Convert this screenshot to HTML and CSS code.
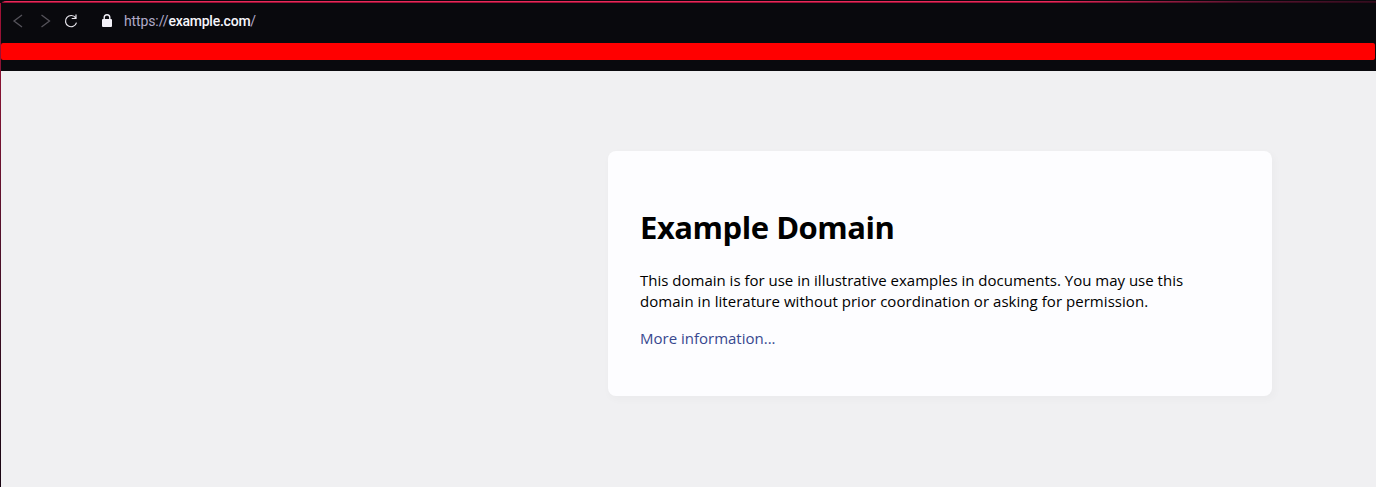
FILE: index.html
```html
<!DOCTYPE html>
<html lang="en">
<head>
<meta charset="utf-8">
<title>Example Domain</title>
<link rel="stylesheet" href="styles.css">
</head>
<body>
<div class="window">
  <header class="toolbar">
    <svg class="icon nav" viewBox="0 0 16 16"><path d="M12 2 4 8l8 6"/></svg>
    <svg class="icon nav" viewBox="0 0 16 16"><path d="m4.5 2 8 6-8 6"/></svg>
    <svg class="icon reload" viewBox="0 0 16 16"><path d="M12.7 4.9A5.6 5.6 0 1 0 13.5 9.6M13 1.5v4H8.7"/></svg>
    <svg class="icon lock" viewBox="0 0 16 16"><path class="shackle" d="M5.2 7V4.6a2.8 2.8 0 0 1 5.6 0V7"/><rect x="3" y="6" width="10" height="8" rx="1"/></svg>
    <div class="url">https://<span class="host">example.com</span>/</div>
  </header>
  <div class="redaction"></div>
  <div class="strip"></div>
  <main class="page">
    <article class="card">
      <h1>Example Domain</h1>
      <p>This domain is for use in illustrative examples in documents. You may use this<br><span class="line-b">domain in literature without prior coordination or asking for permission.</span></p>
      <p><a class="more">More information...</a></p>
    </article>
  </main>
</div>
</body>
</html>
```
FILE: styles.css
```css
* { box-sizing: border-box; }
body { margin: 0; overflow: hidden; background: #09090d; }
.window {
  position: relative;
  height: 487px;
  padding-left: 1px;
  display: flex;
  flex-direction: column;
  background: #09090d;
}
.window::before {
  content: "";
  position: absolute;
  left: 0;
  top: 3px;
  width: 1px;
  height: 484px;
  background: linear-gradient(#a31237, #8a1233 70px, #50102a 240px, #200716 430px, #180512);
}
.toolbar {
  height: 43px;
  padding: 0 0 2px 9px;
  display: flex;
  align-items: center;
  border-top: 1px solid #09090d;
  border-top-left-radius: 5px;
  background:
    linear-gradient(90deg, #e62a58 0 1050px, #5b1530 1240px, #330d1e) 0 0 / 100% 1px no-repeat,
    linear-gradient(90deg, #980f35 0 1050px, #3b0d20 1240px, #2b0919) 0 1px / 100% 1px no-repeat,
    #09090d;
}
.icon { width: 16px; height: 16px; flex: none; fill: none; stroke-width: 1.3; }
.nav { stroke: #55535b; margin-right: 11px; }
.reload { stroke: #e8e6ed; margin: 0 20px 0 -1px; stroke-width: 1.2; }
.lock { fill: #f3f1f8; margin-right: 9px; }
.shackle { fill: none; stroke: #f3f1f8; stroke-width: 1.4; }
.url { color: #b0a9c9; font: 14px/20px Roboto, sans-serif; letter-spacing: -0.12px; }
.host { color: #f6f5fb; font-weight: 500; letter-spacing: -0.24px; }
.redaction { height: 17px; margin-right: 1px; background: #f00; border-radius: 2px; }
.strip { height: 11px; flex: none; }
.page { flex: 1; padding: 80px 0 0 607px; background: #f0f0f2; }
.card {
  width: 664px;
  height: 245px;
  padding: 55px 32px 32px;
  border-radius: 8px;
  background: #fdfdff;
  box-shadow: 2px 3px 7px 2px rgba(0, 0, 0, 0.02);
  color: #000;
  font: 15px/21px "Open Sans", "Noto Sans", sans-serif;
  white-space: nowrap;
}
h1 { margin: 0 0 21px; font-size: 31px; line-height: 43px; font-weight: 700; letter-spacing: -0.47px; }
p { margin: 0 0 16px; }
.line-b { letter-spacing: 0.045px; }
.more { color: #38488f; }
```
